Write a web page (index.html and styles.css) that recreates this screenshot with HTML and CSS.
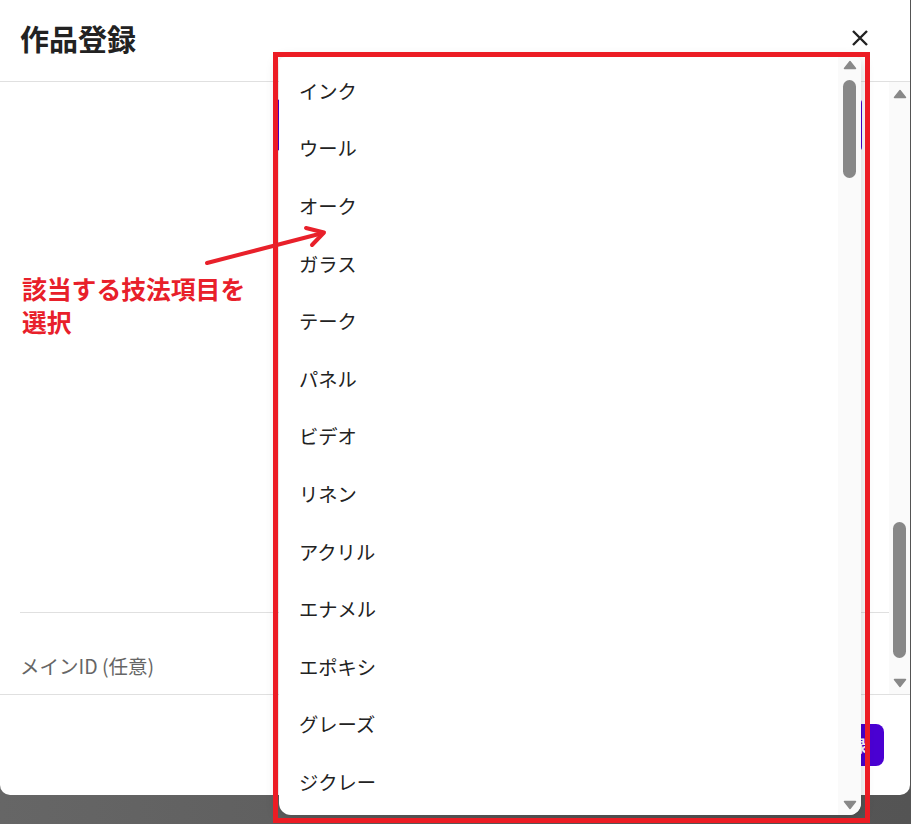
FILE: index.html
```html
<!DOCTYPE html>
<html lang="ja">
<head>
<meta charset="utf-8">
<title>作品登録</title>
<link rel="stylesheet" href="styles.css">
</head>
<body>
<div class="modal">
  <header class="modal-header">
    <h1 class="modal-title">作品登録</h1>
    <button class="close-btn" aria-label="閉じる">
      <svg width="18" height="18" viewBox="0 0 18 18"><path d="M2 2 L16 16 M16 2 L2 16" stroke="#222" stroke-width="2.4" stroke-linecap="butt"/></svg>
    </button>
  </header>
  <div class="modal-body">
    <div class="body-content">
      <div class="form-row">
        <div class="select-box"></div>
      </div>
      <div class="separator"></div>
      <div class="field-label">メインID (任意)</div>
    </div>
    <div class="scrollbar outer-bar">
      <div class="arrow"><svg width="14" height="10" viewBox="0 0 14 10"><path d="M7 1.5 L12.5 8.5 L1.5 8.5 Z" fill="#888" stroke="#888" stroke-width="1.5" stroke-linejoin="round"/></svg></div>
      <div class="thumb outer-thumb"></div>
      <div class="bar-fill"></div>
      <div class="arrow"><svg width="14" height="10" viewBox="0 0 14 10"><path d="M7 8.5 L12.5 1.5 L1.5 1.5 Z" fill="#888" stroke="#888" stroke-width="1.5" stroke-linejoin="round"/></svg></div>
    </div>
  </div>
  <footer class="modal-footer">
    <button class="primary-btn">登録</button>
  </footer>
</div>

<div class="dropdown">
  <ul class="option-list">
    <li>インク</li>
    <li>ウール</li>
    <li>オーク</li>
    <li>ガラス</li>
    <li>テーク</li>
    <li>パネル</li>
    <li>ビデオ</li>
    <li>リネン</li>
    <li>アクリル</li>
    <li>エナメル</li>
    <li>エポキシ</li>
    <li>グレーズ</li>
    <li>ジクレー</li>
  </ul>
  <div class="scrollbar inner-bar">
    <div class="arrow"><svg width="14" height="10" viewBox="0 0 14 10"><path d="M7 1.5 L12.5 8.5 L1.5 8.5 Z" fill="#888" stroke="#888" stroke-width="1.5" stroke-linejoin="round"/></svg></div>
    <div class="thumb inner-thumb"></div>
    <div class="bar-fill"></div>
    <div class="arrow"><svg width="14" height="10" viewBox="0 0 14 10"><path d="M7 8.5 L12.5 1.5 L1.5 1.5 Z" fill="#888" stroke="#888" stroke-width="1.5" stroke-linejoin="round"/></svg></div>
  </div>
</div>

<div class="callout-frame"></div>
<svg class="callout-arrow" width="911" height="824" viewBox="0 0 911 824">
  <path d="M207 263 L323 233" stroke="#e8202a" stroke-width="4" stroke-linecap="round" fill="none"/>
  <path d="M306 228 L324 232.5 L312 245" stroke="#e8202a" stroke-width="4" stroke-linecap="round" stroke-linejoin="round" fill="none"/>
</svg>
<p class="callout-text">該当する技法項目を<br>選択</p>
</body>
</html>
```

FILE: styles.css
```css
* {
  box-sizing: border-box;
}

html, body {
  margin: 0;
  padding: 0;
}

body {
  width: 911px;
  height: 824px;
  overflow: hidden;
  position: relative;
  background: linear-gradient(90deg, #666 0%, #5a5a5a 60%, #545454 100%);
  font-family: "Noto Sans CJK JP", "Noto Sans", sans-serif;
  color: #222;
}

.modal {
  width: 910px;
  height: 795px;
  background: #fff;
  border-radius: 0 0 10px 10px;
  display: flex;
  flex-direction: column;
}

.modal-header {
  height: 82px;
  border-bottom: 1px solid #e0e0e0;
  display: flex;
  align-items: center;
  justify-content: space-between;
  padding: 0 38px 4px 20px;
}

.modal-title {
  margin: 0;
  font-size: 29px;
  font-weight: 700;
  color: #222;
  line-height: 1;
}

.close-btn {
  width: 24px;
  height: 24px;
  padding: 0;
  border: none;
  background: none;
  display: flex;
  align-items: center;
  justify-content: center;
  margin-top: -2px;
}

.modal-body {
  height: 612px;
  display: flex;
}

.body-content {
  flex: 1;
  padding-left: 20px;
  display: flex;
  flex-direction: column;
}

.form-row {
  margin-top: 17px;
  padding-left: 257px;
  padding-right: 27px;
}

.select-box {
  height: 52px;
  border: 2px solid #4b00d1;
  border-radius: 4px;
}

.separator {
  margin-top: 461px;
  height: 1px;
  background: #e0e0e0;
}

.field-label {
  margin-top: 40px;
  font-size: 19.5px;
  line-height: 26px;
  color: #666;
}

.scrollbar {
  display: flex;
  flex-direction: column;
  align-items: center;
  background: #fafafa;
}

.outer-bar {
  width: 21px;
  padding-top: 4px;
  padding-bottom: 3px;
}

.arrow {
  height: 16px;
  display: flex;
  align-items: center;
  justify-content: center;
}

.thumb {
  width: 13px;
  border-radius: 7px;
  background: #888;
}

.outer-thumb {
  margin-top: 420px;
  height: 136px;
}

.bar-fill {
  flex: 1;
}

.modal-footer {
  flex: 1;
  border-top: 1px solid #e0e0e0;
  display: flex;
  align-items: center;
  justify-content: flex-end;
  padding-right: 26px;
}

.primary-btn {
  height: 42px;
  padding: 0 18px;
  border: none;
  border-radius: 8px;
  background: #4a00d2;
  color: #fff;
  font-family: "Noto Sans CJK JP", sans-serif;
  font-size: 16px;
  font-weight: 700;
}

.dropdown {
  position: absolute;
  left: 279px;
  top: 57px;
  width: 582px;
  height: 758px;
  background: #fff;
  border-radius: 6px 6px 12px 12px;
  box-shadow: 0 3px 14px rgba(0, 0, 0, 0.2);
  display: flex;
  overflow: hidden;
}

.option-list {
  flex: 1;
  margin: 0;
  padding: 5px 0 0 0;
  list-style: none;
}

.option-list li {
  height: 57.6px;
  display: flex;
  align-items: center;
  padding-left: 20px;
  font-size: 19.3px;
  color: #222;
}

.inner-bar {
  width: 23px;
  padding-bottom: 2px;
}

.inner-thumb {
  margin-top: 7px;
  height: 98px;
}

.callout-frame {
  position: absolute;
  left: 273px;
  top: 52px;
  width: 597px;
  height: 771px;
  border: 5px solid #ec1c24;
}

.callout-arrow {
  position: absolute;
  left: 0;
  top: 0;
  pointer-events: none;
}

.callout-text {
  position: absolute;
  left: 22px;
  top: 272px;
  margin: 0;
  font-size: 24.8px;
  line-height: 33px;
  font-weight: 700;
  color: #e8202a;
}
```
